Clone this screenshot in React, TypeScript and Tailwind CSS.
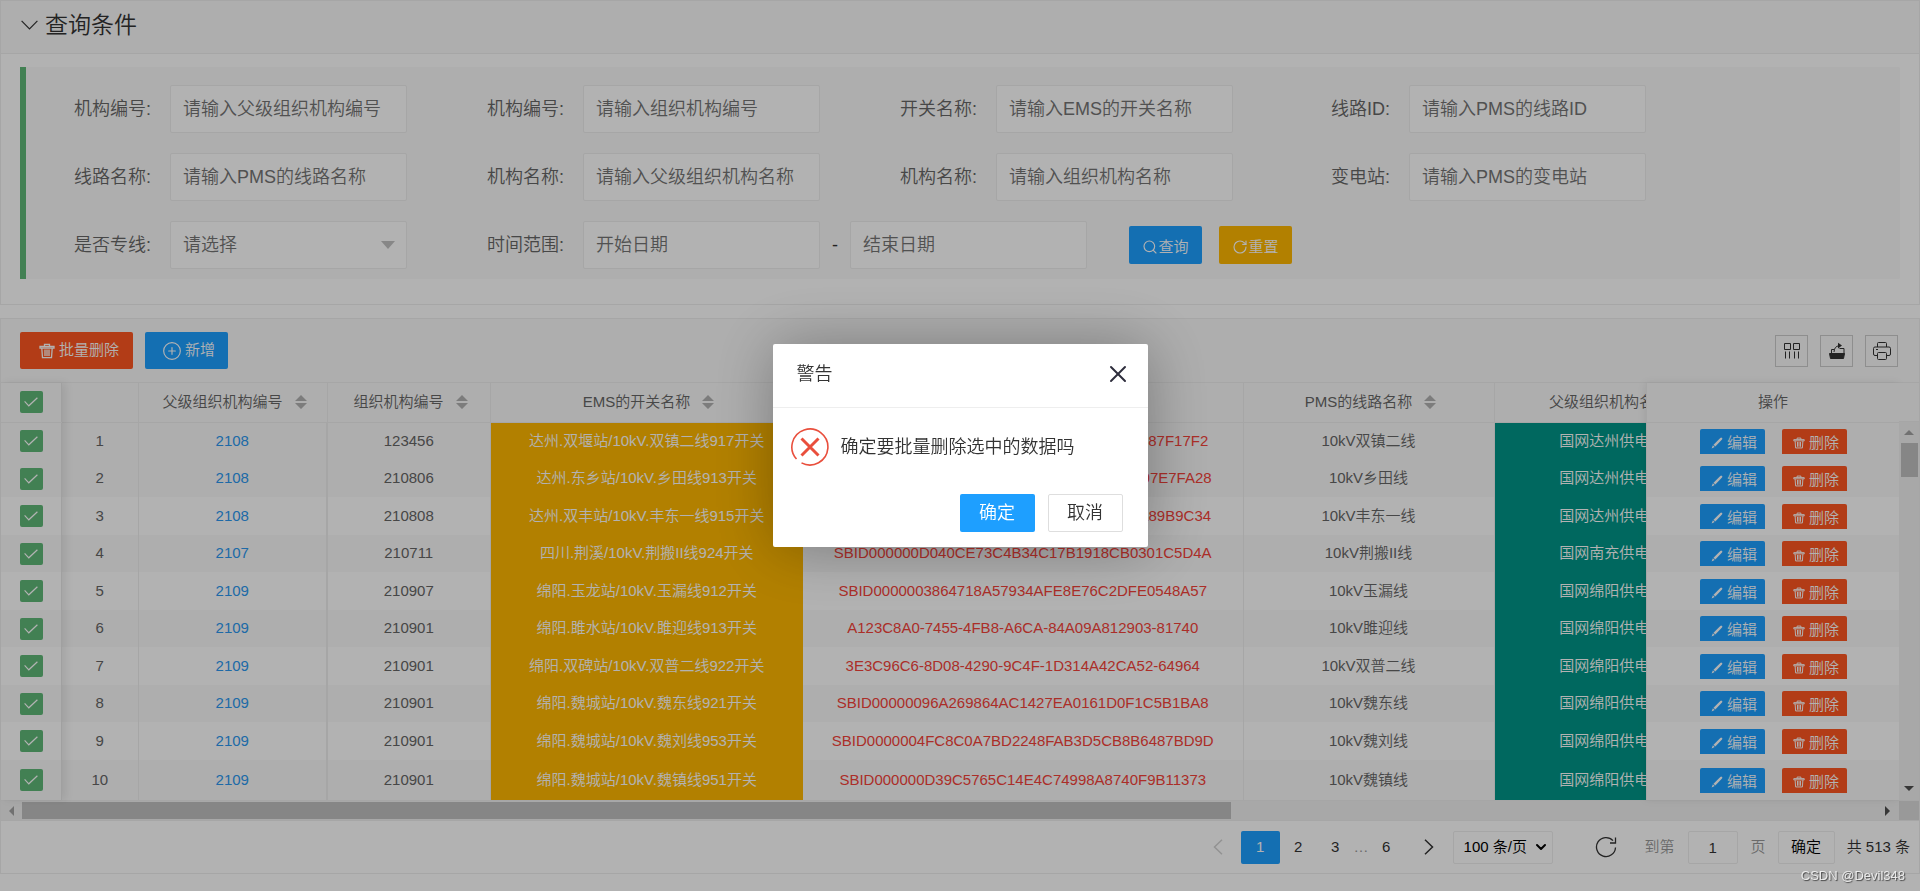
import React from "react";
import { ChevronDown, CirclePlus, RotateCw, Search, X } from "lucide-react";

type Row = {
  parent: string;
  org: string;
  ems: string;
  code: string;
  line: string;
  company: string;
};

const rows: Row[] = [
  { parent: "2108", org: "123456", ems: "达州.双堰站/10kV.双镇二线917开关", code: "SBID000000C31D5B804072BC96D1A510D1887F17F2", line: "10kV双镇二线", company: "国网达州供电公司" },
  { parent: "2108", org: "210806", ems: "达州.东乡站/10kV.乡田线913开关", code: "SBID000000C31D5B8C4072BC96D1A50C0D07E7FA28", line: "10kV乡田线", company: "国网达州供电公司" },
  { parent: "2108", org: "210808", ems: "达州.双丰站/10kV.丰东一线915开关", code: "SBID000000C31D5B8C4072BC9611A5C0D1A89B9C34", line: "10kV丰东一线", company: "国网达州供电公司" },
  { parent: "2107", org: "210711", ems: "四川.荆溪/10kV.荆搬II线924开关", code: "SBID000000D040CE73C4B34C17B1918CB0301C5D4A", line: "10kV荆搬II线", company: "国网南充供电公司" },
  { parent: "2109", org: "210907", ems: "绵阳.玉龙站/10kV.玉漏线912开关", code: "SBID0000003864718A57934AFE8E76C2DFE0548A57", line: "10kV玉漏线", company: "国网绵阳供电公司" },
  { parent: "2109", org: "210901", ems: "绵阳.雎水站/10kV.雎迎线913开关", code: "A123C8A0-7455-4FB8-A6CA-84A09A812903-81740", line: "10kV雎迎线", company: "国网绵阳供电公司" },
  { parent: "2109", org: "210901", ems: "绵阳.双碑站/10kV.双普二线922开关", code: "3E3C96C6-8D08-4290-9C4F-1D314A42CA52-64964", line: "10kV双普二线", company: "国网绵阳供电公司" },
  { parent: "2109", org: "210901", ems: "绵阳.魏城站/10kV.魏东线921开关", code: "SBID00000096A269864AC1427EA0161D0F1C5B1BA8", line: "10kV魏东线", company: "国网绵阳供电公司" },
  { parent: "2109", org: "210901", ems: "绵阳.魏城站/10kV.魏刘线953开关", code: "SBID0000004FC8C0A7BD2248FAB3D5CB8B6487BD9D", line: "10kV魏刘线", company: "国网绵阳供电公司" },
  { parent: "2109", org: "210901", ems: "绵阳.魏城站/10kV.魏镇线951开关", code: "SBID000000D39C5765C14E4C74998A8740F9B11373", line: "10kV魏镇线", company: "国网绵阳供电公司" },
];

const fields = [
  { id: "parentCode", label: "机构编号:", hint: "请输入父级组织机构编号" },
  { id: "orgCode", label: "机构编号:", hint: "请输入组织机构编号" },
  { id: "emsName", label: "开关名称:", hint: "请输入EMS的开关名称" },
  { id: "lineId", label: "线路ID:", hint: "请输入PMS的线路ID" },
  { id: "lineName", label: "线路名称:", hint: "请输入PMS的线路名称" },
  { id: "parentName", label: "机构名称:", hint: "请输入父级组织机构名称" },
  { id: "orgName", label: "机构名称:", hint: "请输入组织机构名称" },
  { id: "station", label: "变电站:", hint: "请输入PMS的变电站" },
];

const inputClass =
  "h-12 w-[237px] rounded-xs border border-[#eee] bg-white px-3 text-lg text-[#757575] placeholder:text-[#757575]";
const labelClass = "w-[138px] pr-[19px] text-right text-lg text-[#666]";
const headRow = "h-[39px] border-b border-[#eee] bg-[#f9f9f9]";
const bodyRow = "h-[38px] even:h-[37px] even:bg-[#f9f9f9] first:bg-[#f9f9f9] last:even:h-[40px]";

const TrashIcon = ({ className }: { className: string }) => (
  <svg viewBox="0 0 16 16" className={className} fill="none" stroke="currentColor" strokeWidth="1.3" aria-hidden="true">
    <path d="M5.5 3.4V1.4h5v2M1 3.5h14v1.6H1zM2.8 5.2l.7 9.4h9l.7-9.4M6 6.5v6.5M8 6.5v6.5M10 6.5v6.5" />
  </svg>
);

const PencilIcon = () => (
  <svg viewBox="0 0 12 12" className="size-3" fill="currentColor" aria-hidden="true">
    <path d="M9.3.9a1.2 1.2 0 0 1 1.7 1.7L4.3 9.4 2.5 7.7zM1.9 8.3l1.8 1.8L.6 11.4z" />
  </svg>
);

const SortIcon = () => (
  <svg viewBox="0 0 12 14" className="h-[14px] w-3" fill="#b2b2b2" aria-hidden="true">
    <path d="M6 0l6 6H0zM0 8h12l-6 6z" />
  </svg>
);

const HeadLabel = ({ text }: { text: string }) => (
  <span className="flex items-center justify-center gap-3 pl-1 whitespace-nowrap">
    {text}
    <SortIcon />
  </span>
);

const CheckBox = ({ label }: { label: string }) => (
  <label className="grid place-items-center">
    <input
      type="checkbox"
      defaultChecked
      aria-label={label}
      className="col-start-1 row-start-1 h-[22px] w-[23px] appearance-none rounded-xs bg-[#5fb878]"
    />
    <svg viewBox="0 0 14 10" className="col-start-1 row-start-1 h-[10px] w-[14px]" fill="none" stroke="#fff" strokeWidth="1.2">
      <path d="M.6 4.4l4.2 4.4L13.4.8" />
    </svg>
  </label>
);

const SearchPanel = () => (
  <section className="border border-[#eee] bg-white">
    <h2 className="flex h-[53px] items-center gap-[7px] border-b border-[#eee] bg-[#f9f9f9] pb-1 pl-5 text-[23px] text-[#333]">
      <svg viewBox="0 0 17 10" className="h-[10px] w-[17px]" fill="none" stroke="currentColor" strokeWidth="1.2" aria-hidden="true">
        <path d="M.6.8l7.9 8 7.9-8" />
      </svg>
      查询条件
    </h2>
    <form className="mx-[19px] mt-[13px] mb-[25px] flex flex-col gap-5 rounded-r-xs border-l-6 border-[#5fb878] bg-[#f9f9f9] pt-[18px] pb-[10px] pl-[6px]">
      <div className="flex flex-wrap gap-x-[38px] gap-y-5 pr-52">
        {fields.map((f) => (
          <div key={f.id} className="flex items-center">
            <label htmlFor={f.id} className={labelClass}>
              {f.label}
            </label>
            <input id={f.id} type="text" placeholder={f.hint} className={inputClass} />
          </div>
        ))}
      </div>
      <div className="flex flex-wrap items-center gap-x-[38px]">
        <div className="flex items-center">
          <label htmlFor="special" className={labelClass}>
            是否专线:
          </label>
          <div className="grid items-center">
            <select id="special" className={`${inputClass} col-start-1 row-start-1 appearance-none`}>
              <option>请选择</option>
              <option>是</option>
              <option>否</option>
            </select>
            <svg viewBox="0 0 14 8" className="pointer-events-none col-start-1 row-start-1 mr-3 h-2 w-[14px] justify-self-end" fill="#c2c2c2">
              <path d="M0 0h14L7 8z" />
            </svg>
          </div>
        </div>
        <div className="flex items-center">
          <label htmlFor="start" className={labelClass}>
            时间范围:
          </label>
          <input id="start" type="text" placeholder="开始日期" className={inputClass} />
          <span className="w-[30px] text-center text-lg text-[#333]">-</span>
          <input type="text" aria-label="结束日期" placeholder="结束日期" className={inputClass} />
        </div>
        <div className="flex gap-[17px] pl-1">
          <button type="button" className="flex h-[38px] w-[73px] items-center justify-center rounded-xs bg-[#1e9fff] pt-1 text-[15px] text-white">
            <Search size={16} strokeWidth={1.7} />
            查询
          </button>
          <button type="reset" className="flex h-[38px] w-[73px] items-center justify-center rounded-xs bg-[#ffb800] pt-1 text-[15px] text-white">
            <RotateCw size={16} strokeWidth={1.7} />
            重置
          </button>
        </div>
      </div>
    </form>
  </section>
);

const Toolbar = () => (
  <div className="flex h-16 items-center justify-between border-b border-[#eee] bg-[#f9f9f9] pr-[21px] pl-[19px]">
    <div className="flex gap-3">
      <button type="button" className="flex h-[37px] w-[113px] items-center justify-center gap-1 rounded-xs bg-[#ff5722] pl-[5px] text-[15px] text-white">
        <TrashIcon className="size-4" />
        批量删除
      </button>
      <button type="button" className="flex h-[37px] w-[83px] items-center justify-center gap-[3px] rounded-xs bg-[#1e9fff] pl-1 text-[15px] text-white">
        <CirclePlus size={20} strokeWidth={1.4} />
        新增
      </button>
    </div>
    <div className="flex gap-3 text-[#333]">
      <button type="button" title="筛选列" className="flex h-8 w-[33px] items-center justify-center border border-[#ccc]">
        <svg viewBox="0 0 18 18" className="size-[18px]" fill="none" stroke="currentColor">
          <path d="M1.5 1.5h6v6h-6zM10.500 1.500h6v6h-6zM2.500 9.500v7M6.500 9.500v7M11.500 9.500v7M15.500 9.500v7" />
        </svg>
      </button>
      <button type="button" title="导出" className="flex h-8 w-[33px] items-center justify-center border border-[#ccc]">
        <svg viewBox="0 0 18 18" className="size-[18px]" fill="none" stroke="currentColor">
          <path d="M1.500 11.500h15l-1 5h-13z" fill="currentColor" />
          <path d="M3.500 11V7.500h3M11.500 6.500h4.500v6M6 10c.2-3.800 2-6 5-6.200" />
          <path d="M10 .8l4 2.800-4 2.800z" fill="currentColor" stroke="none" />
        </svg>
      </button>
      <button type="button" title="打印" className="flex h-8 w-[33px] items-center justify-center border border-[#ccc]">
        <svg viewBox="0 0 18 18" className="size-[18px]" fill="none" stroke="currentColor">
          <path d="M4.500 5V1.500a1 1 0 0 1 1-1h7a1 1 0 0 1 1 1V5M4 13.500H2a1.500 1.500 0 0 1-1.500-1.500V6.500A1.500 1.500 0 0 1 2 5h14a1.500 1.500 0 0 1 1.500 1.500V12a1.500 1.500 0 0 1-1.500 1.500h-2M4.500 11.500a1 1 0 0 1 1-1h7a1 1 0 0 1 1 1v5a1 1 0 0 1-1 1h-7a1 1 0 0 1-1-1zM3 7.500h2" />
        </svg>
      </button>
    </div>
  </div>
);

const DataTable = () => (
  <div className="flex">
    <table className="relative z-10 w-[61px] shrink-0 table-fixed border-r border-[#e6e6e6] bg-white shadow-[4px_0_8px_rgba(0,0,0,0.08)]">
      <thead>
        <tr className={headRow}>
          <th>
            <CheckBox label="全选" />
          </th>
        </tr>
      </thead>
      <tbody>
        {rows.map((_, i) => (
          <tr key={i} className={bodyRow}>
            <td>
              <CheckBox label={`选择第${i + 1}行`} />
            </td>
          </tr>
        ))}
      </tbody>
    </table>

    <div className="min-w-0 flex-1 overflow-hidden">
      <table className="w-[1682px] table-fixed text-center text-[15px] whitespace-nowrap text-[#666]">
        <colgroup>
          <col className="w-[76px]" />
          <col className="w-[189px]" />
          <col className="w-[163px]" />
          <col className="w-[313px]" />
          <col className="w-[440px]" />
          <col className="w-[251px]" />
          <col className="w-[250px]" />
        </colgroup>
        <thead>
          <tr className={`${headRow} *:border-r *:border-[#eee] *:font-[350]`}>
            <th></th>
            <th>
              <HeadLabel text="父级组织机构编号" />
            </th>
            <th>
              <HeadLabel text="组织机构编号" />
            </th>
            <th>
              <HeadLabel text="EMS的开关名称" />
            </th>
            <th>
              <HeadLabel text="EMS的开关ID" />
            </th>
            <th>
              <HeadLabel text="PMS的线路名称" />
            </th>
            <th>
              <HeadLabel text="父级组织机构名称" />
            </th>
          </tr>
        </thead>
        <tbody>
          {rows.map((r, i) => (
            <tr key={i} className={bodyRow}>
              <td className="border-r border-[#eee]">{i + 1}</td>
              <td className="border-r-2 border-[#eee]">
                <a href="#" className="text-[#2b98f0]">
                  {r.parent}
                </a>
              </td>
              <td className="border-r border-[#eee]">{r.org}</td>
              <td className="bg-[#ffb800] text-white">{r.ems}</td>
              <td className="border-r border-[#eee] text-[#f5433a]">{r.code}</td>
              <td className="border-r border-[#eee]">{r.line}</td>
              <td className="bg-[#009688] text-white">{r.company}</td>
            </tr>
          ))}
        </tbody>
      </table>
    </div>

    <table className="relative z-10 w-[253px] shrink-0 table-fixed border-l border-[#eee] bg-white text-[15px] text-[#666] shadow-[-1px_0_8px_rgba(0,0,0,0.08)]">
      <thead>
        <tr className={headRow}>
          <th className="font-[350]">操作</th>
        </tr>
      </thead>
      <tbody>
        {rows.map((_, i) => (
          <tr key={i} className={bodyRow}>
            <td>
              <div className="flex justify-center gap-[17px] text-white">
                <button type="button" className="flex h-[25px] w-[65px] items-center justify-center gap-1 rounded-t-xs bg-[#1e9fff] pt-1 pl-1">
                  <PencilIcon />
                  编辑
                </button>
                <button type="button" className="flex h-[25px] w-[65px] items-center justify-center gap-1 rounded-t-xs bg-[#ff5722] pt-1 pl-1">
                  <TrashIcon className="size-3" />
                  删除
                </button>
              </div>
            </td>
          </tr>
        ))}
      </tbody>
    </table>

    <div className="relative z-10 flex w-5 shrink-0 flex-col">
      <div className={headRow}></div>
      <div className="flex flex-1 flex-col items-center bg-[#f1f1f1] pt-2">
        <svg viewBox="0 0 10 5" className="h-[5px] w-[10px]" fill="#a3a3a3">
          <path d="M5 0l5 5H0z" />
        </svg>
        <div className="mt-2 h-[34px] w-[17px] bg-[#c1c1c1]"></div>
        <svg viewBox="0 0 10 5" className="mt-auto mb-[9px] h-[5px] w-[10px]" fill="#505050">
          <path d="M0 0h10L5 5z" />
        </svg>
      </div>
    </div>
  </div>
);

const HorizontalBar = () => (
  <div className="flex h-[21px] border-y border-[#eee] bg-[#f1f1f1]">
    <div className="flex w-[21px] items-center justify-center">
      <svg viewBox="0 0 5 10" className="h-[10px] w-[5px]" fill="#a3a3a3">
        <path d="M5 0v10L0 5z" />
      </svg>
    </div>
    <div className="flex flex-1 items-center">
      <div className="h-[17px] w-[65.2%] bg-[#c1c1c1]"></div>
    </div>
    <div className="flex w-[23px] items-center justify-center">
      <svg viewBox="0 0 5 10" className="h-[10px] w-[5px]" fill="#505050">
        <path d="M0 0v10l5-5z" />
      </svg>
    </div>
    <div className="w-5 bg-[#dcdcdc]"></div>
  </div>
);

const pageClass = "flex h-[33px] w-[37px] items-center justify-center";

const Pagination = () => (
  <div className="flex h-[52px] items-center justify-end pr-[9px] text-[15px] text-[#333]">
    <a href="#" aria-label="上一页" className="flex w-[46px] justify-center text-[#d2d2d2]">
      <svg viewBox="0 0 10 16" className="h-4 w-[10px]" fill="none" stroke="currentColor" strokeWidth="1.5">
        <path d="M9 .8L1.500 8 9 15.200" />
      </svg>
    </a>
    <span className="flex h-[33px] w-[39px] items-center justify-center rounded-xs bg-[#1e9fff] text-white">1</span>
    <a href="#" className={pageClass}>
      2
    </a>
    <a href="#" className={pageClass}>
      3
    </a>
    <span className="w-[14px] text-center text-[#999]">…</span>
    <a href="#" className={pageClass}>
      6
    </a>
    <a href="#" aria-label="下一页" className="flex w-12 justify-center">
      <svg viewBox="0 0 10 16" className="h-4 w-[10px]" fill="none" stroke="currentColor" strokeWidth="1.5">
        <path d="M1 .8L8.500 8 1 15.200" />
      </svg>
    </a>
    <div className="grid items-center">
      <select aria-label="每页条数" className="col-start-1 row-start-1 h-[33px] w-[100px] appearance-none rounded-xs border border-[#eee] pl-[10px] text-black">
        <option>100 条/页</option>
      </select>
      <ChevronDown size={16} strokeWidth={3} className="pointer-events-none col-start-1 row-start-1 mr-1 justify-self-end text-black" />
    </div>
    <button type="button" aria-label="刷新" className="mr-[28px] ml-[42px]">
      <svg viewBox="0 0 22 22" className="size-[22px]" fill="none" stroke="currentColor" strokeWidth="1.3">
        <path d="M20.500 11.500A9.500 9.500 0 1 1 18 4.600M20.500 1.500v5.500h-5.500" />
      </svg>
    </button>
    <label htmlFor="page" className="text-[#999]">
      到第
    </label>
    <input id="page" type="text" defaultValue="1" className="mx-[13px] h-[33px] w-[50px] rounded-xs border border-[#eee] text-center" />
    <span className="text-[#999]">页</span>
    <button type="button" className="mx-3 h-[33px] w-[57px] rounded-xs border border-[#eee] text-black">
      确定
    </button>
    <span>共 513 条</span>
  </div>
);

const ConfirmDialog = () => (
  <div className="fixed inset-0 z-20 flex items-center justify-center bg-black/30">
    <div role="dialog" aria-labelledby="confirm-title" className="w-[375px] rounded-xs bg-white shadow-[1px_1px_62px_rgba(0,0,0,0.3)]">
      <div className="flex h-16 items-center justify-between border-b border-[#eee] pr-4 pb-1 pl-6 text-[#333]">
        <h3 id="confirm-title" className="text-lg">
          警告
        </h3>
        <button type="button" aria-label="关闭" className="text-[#2e2d3c]">
          <X size={28} strokeWidth={1.7} />
        </button>
      </div>
      <div className="flex items-center gap-3 px-[18px] pt-5">
        <svg viewBox="0 0 38 38" className="size-[38px]" fill="none" stroke="#e94f3d" aria-hidden="true">
          <path d="M5.500 31A18 18 0 1 1 10.500 34.900" strokeWidth="1.6" />
          <path d="M10.500 10.500l17 17M27.500 10.500l-17 17" strokeWidth="3" />
        </svg>
        <p className="text-lg whitespace-nowrap text-[#333]">确定要批量删除选中的数据吗</p>
      </div>
      <div className="flex justify-end gap-[13px] pt-7 pr-[25px] pb-[15px] text-lg">
        <button type="button" className="h-[38px] w-[75px] rounded-xs bg-[#1e9fff] leading-none text-white">
          确定
        </button>
        <button type="button" className="h-[38px] w-[75px] rounded-xs border border-[#dedede] leading-none text-[#333]">
          取消
        </button>
      </div>
    </div>
  </div>
);

const App: React.FC = () => {
  return (
    <div className="min-h-screen bg-white font-['Liberation_Sans','Noto_Sans_CJK_SC',sans-serif] font-[350]">
      <SearchPanel />
      <section className="mt-[13px] border border-[#eee] bg-white">
        <Toolbar />
        <DataTable />
        <HorizontalBar />
        <Pagination />
      </section>
      <ConfirmDialog />
      <span className="fixed right-[15px] bottom-[6px] z-30 text-[13px] text-white/80 [text-shadow:1px_1px_1px_rgba(0,0,0,0.6)]">
        CSDN @Devil348
      </span>
    </div>
  );
};

export default App;
